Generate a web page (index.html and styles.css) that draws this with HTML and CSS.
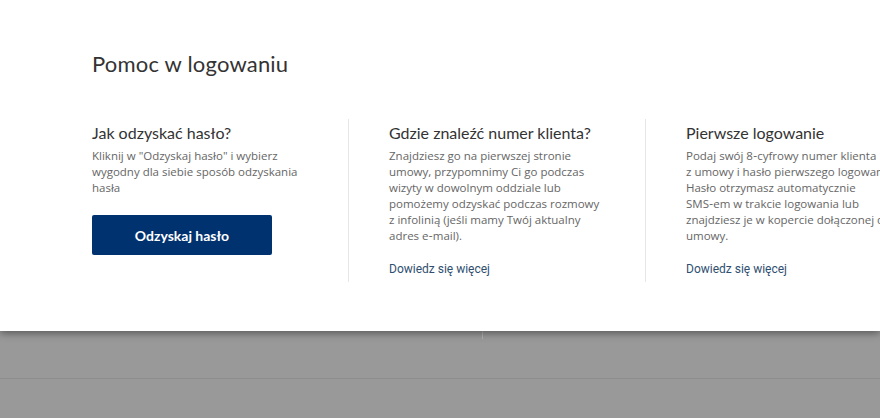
FILE: index.html
```html
<!DOCTYPE html>
<html lang="pl">
<head>
<meta charset="utf-8">
<title>Pomoc w logowaniu</title>
<link rel="stylesheet" href="styles.css">
</head>
<body>
<div class="backdrop">
  <div class="backdrop-row">
    <div class="backdrop-cell"></div>
    <div class="backdrop-cell backdrop-cell--right"></div>
  </div>
</div>
<section class="panel">
  <h1 class="panel-title">Pomoc w&nbsp;logowaniu</h1>
  <div class="cols">
    <div class="col">
      <h2 class="col-title">Jak odzyskać hasło?</h2>
      <p class="col-text">Kliknij w&nbsp;"Odzyskaj hasło" i&nbsp;wybierz wygodny dla siebie sposób odzyskania hasła</p>
      <a class="btn" href="#">Odzyskaj hasło</a>
    </div>
    <div class="col">
      <h2 class="col-title">Gdzie znaleźć numer klienta?</h2>
      <p class="col-text">Znajdziesz go na pierwszej stronie umowy, przypomnimy Ci go podczas wizyty w&nbsp;dowolnym oddziale lub pomożemy odzyskać podczas rozmowy z&nbsp;infolinią (jeśli mamy Twój aktualny adres e&#8209;mail).</p>
      <a class="link" href="#">Dowiedz się więcej</a>
    </div>
    <div class="col">
      <h2 class="col-title">Pierwsze logowanie</h2>
      <p class="col-text">Podaj swój 8&#8209;cyfrowy numer klienta z&nbsp;umowy i&nbsp;hasło pierwszego logowania. Hasło otrzymasz automatycznie SMS&#8209;em w&nbsp;trakcie logowania lub znajdziesz je w&nbsp;kopercie dołączonej do umowy.</p>
      <a class="link" href="#">Dowiedz się więcej</a>
    </div>
  </div>
</section>
</body>
</html>
```
FILE: styles.css
```css
html, body {
  margin: 0;
  padding: 0;
  width: 880px;
  height: 418px;
  overflow: hidden;
  background: #999999;
  font-family: Lato, "Liberation Sans", sans-serif;
}

.backdrop {
  position: absolute;
  left: 0;
  top: 331px;
  width: 880px;
  height: 87px;
  background: #999999;
}

.backdrop-row {
  display: flex;
  height: 47px;
  border-bottom: 1px solid #8c8c8c;
}

.backdrop-cell {
  width: 482px;
}

.backdrop-cell--right {
  flex: 1;
  border-left: 1px solid #b0b0b0;
  height: 8px;
}

.panel {
  position: relative;
  z-index: 1;
  background: #ffffff;
  height: 331px;
  box-sizing: border-box;
  padding: 50px 0 0 92px;
  box-shadow: 0 2px 8px rgba(0, 0, 0, 0.45);
}

.panel-title {
  margin: 0;
  font-size: 22px;
  line-height: 28px;
  font-weight: 400;
  color: #333333;
  letter-spacing: 0.2px;
}

.cols {
  display: flex;
  margin-top: 41px;
  width: 1000px;
}

.col {
  width: 216px;
  flex: none;
  padding: 4px 40px 5px 0;
  display: flex;
  flex-direction: column;
  align-items: flex-start;
}

.col + .col {
  border-left: 1px solid #e6e6e6;
  padding-left: 40px;
}

.col-title {
  margin: 0;
  font-size: 16px;
  line-height: 20px;
  font-weight: 400;
  color: #333333;
}

.col-text {
  margin: 5px 0 0;
  font-family: "Open Sans", Lato, sans-serif;
  font-size: 11.5px;
  line-height: 16px;
  color: #666666;
}

.btn {
  margin-top: 19px;
  width: 180px;
  height: 40px;
  box-sizing: border-box;
  display: flex;
  align-items: center;
  justify-content: center;
  background: #00326f;
  color: #ffffff;
  border-radius: 2px;
  font-size: 14px;
  font-weight: 700;
  text-decoration: none;
}

.link {
  margin-top: auto;
  padding-top: 17px;
  font-family: Roboto, "Liberation Sans", sans-serif;
  font-size: 12px;
  line-height: 16px;
  color: #2f4f70;
  text-decoration: none;
}
```
